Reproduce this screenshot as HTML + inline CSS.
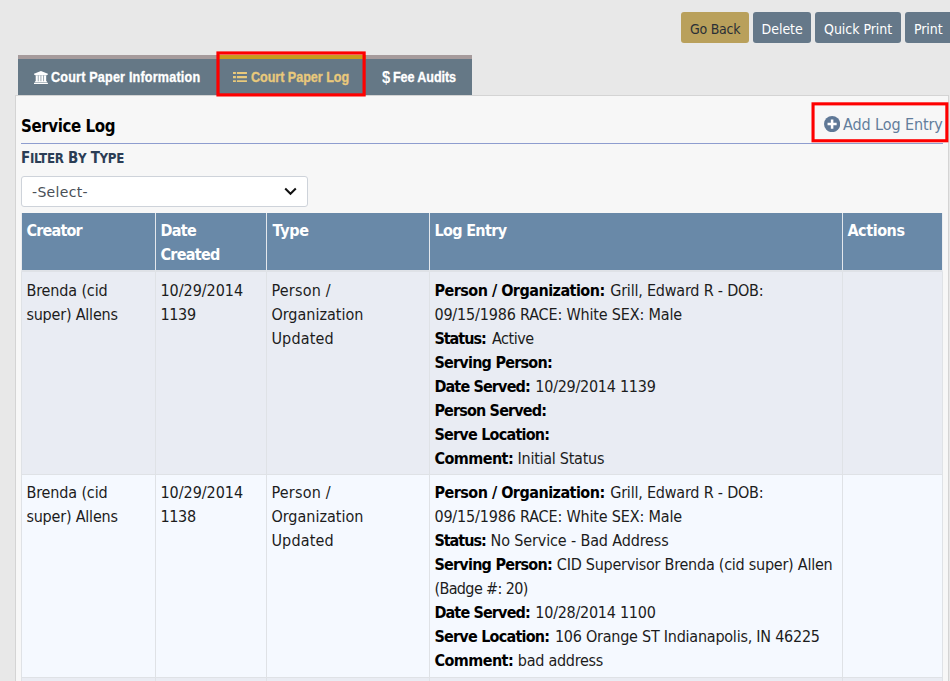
<!DOCTYPE html>
<html lang="en">
<head>
<meta charset="utf-8">
<title>Service Log</title>
<style>
*{box-sizing:border-box;margin:0;padding:0}
html,body{width:950px;height:681px;overflow:hidden;background:#e8e8e8}
body{position:relative;font-family:"DejaVu Sans Condensed","DejaVu Sans","Liberation Sans",sans-serif;font-stretch:condensed;font-size:16px;color:#1c1c1c}
b{font-weight:bold}
.abs{position:absolute}
.btn{position:absolute;top:12px;height:31px;border-radius:3px;background:#657889;color:#fff;font-size:14px;line-height:31px;white-space:nowrap;overflow:hidden}
.btn.gold{background:#b9a05b;color:#2a2f36}
.btn span{position:absolute;left:0;top:2px}
.tabs{position:absolute;left:18px;top:55px;height:40px;width:454px}
.tab{position:absolute;top:0;height:40px;background:#657886;border-top:4px solid #a69b9c;color:#fff;font-family:"Liberation Sans","DejaVu Sans",sans-serif;font-weight:bold;font-size:14px;line-height:36px;white-space:nowrap}
.tab.active{border-top-color:#c99b1c;color:#e9c97b}
.tab b{position:absolute;left:0;top:0;transform-origin:0 50%;-webkit-text-stroke:0.300px currentColor}
.panel{position:absolute;left:15px;top:95px;width:934px;height:600px;background:#f7f7f7;border:1px solid #d4d4d4}
h2{position:absolute;left:0;top:113px;transform-origin:0 50%;font-size:18px;line-height:26px;font-weight:bold;color:#000;white-space:nowrap}
.rule{position:absolute;left:21px;top:143px;width:922px;height:1px;background:#8e9dcf}
.flt{position:absolute;left:0;top:147px;font-weight:bold;color:#2b3d55;font-size:15px;line-height:22px;white-space:nowrap}
.flt small{font-size:13.200px}
.sel{position:absolute;left:21px;top:176px;width:287px;height:31px;background:#fff;border:1px solid #ced3da;border-radius:3px;font-family:"DejaVu Sans","Liberation Sans",sans-serif;font-stretch:normal;font-size:14px;line-height:29px;color:#495057;white-space:nowrap}
.sel span{position:absolute;left:0;top:1px}
.add{position:absolute;left:0;top:112px;font-size:16px;line-height:26px;color:#627d9c;white-space:nowrap}
table{position:absolute;left:21px;top:213px;border-collapse:separate;border-spacing:0;table-layout:fixed;width:922px}
th,td{padding:0 0 0 5px;line-height:24px;vertical-align:top;text-align:left;font-size:16px;font-weight:normal;border-right:1px solid #dfe2e6;white-space:nowrap;overflow:hidden}
th{background:#6989a8;color:#fff;height:59px;padding-top:6px;border-right-color:#e3e7ec;border-bottom:2px solid #dfe2e7}
td{height:203px;padding-top:6px;border-bottom:1px solid #dfe2e6}
tr.r1 td{background:#e9ecf3;height:203px;padding-top:7px}
tr.r2 td{background:#f5f9ff;height:203px;padding-top:6px}
td b{color:#000}
th:first-child,td:first-child{border-left:1px solid #dfe2e6}
th:first-child{border-left-color:#e9ebee}
.ln{height:24px}
</style>
</head>
<body>

<div class="btn gold" style="left:681px;width:68px"><span id="b1" style="letter-spacing:-0.250px;margin-left:9.00px">Go Back</span></div>
<div class="btn" style="left:753px;width:58px"><span id="b2" style="letter-spacing:-0.020px;margin-left:8.50px">Delete</span></div>
<div class="btn" style="left:815px;width:86px"><span id="b3" style="letter-spacing:-0.040px;margin-left:9.05px">Quick Print</span></div>
<div class="btn" style="left:905px;width:60px"><span id="b4" style="letter-spacing:-0.075px;margin-left:9.00px">Print</span></div>
<div class="panel"></div>
<div class="tabs">
<div class="tab" style="left:0;width:199px">
<svg class="abs" style="left:16.050px;top:11.840px" width="13.900" height="13.160" viewBox="0 0 1920 1792" preserveAspectRatio="none"><path fill="#fff" d="M960 0L1920 384V512H1792V576H128V512H0V384ZM236 620H532V1408H236ZM620 620H916V1408H620ZM1004 620H1300V1408H1004ZM1388 620H1684V1408H1388ZM128 1408H1792V1536H128ZM0 1600H1920V1792H0Z"/></svg>
<b id="t1" style="letter-spacing:0.212px;margin-left:33.00px;transform:scaleX(0.9)">Court Paper Information</b></div>
<div class="tab active" style="left:199px;width:149px">
<svg class="abs" style="left:16.100px;top:12.900px" width="14" height="10.300" viewBox="0 0 14 10.300"><path fill="#e9c97b" d="M0 0h2.900v2.100H0zM3.900 0H13.950v2.100H3.900zM0 4.050h2.900v2.100H0zM3.900 4.050H13.950v2.100H3.900zM0 8.150h2.900v2.100H0zM3.900 8.150H13.950v2.100H3.900z"/></svg>
<b id="t2" style="letter-spacing:-0.044px;margin-left:33.55px;transform:scaleX(0.9)">Court Paper Log</b></div>
<div class="tab" style="left:348px;width:106px">
<b id="t3a" style="margin-left:16.35px;transform:scaleX(0.9);font-size:16.500px;top:0;-webkit-text-stroke:0">$</b><b id="t3" style="letter-spacing:-0.111px;margin-left:27.00px;transform:scaleX(0.9)">Fee Audits</b></div>
</div>
<svg class="abs" style="left:210px;top:46px" width="162" height="56" viewBox="210 46 162 56"><rect x="218" y="53" width="146.100" height="41.900" fill="none" stroke="#fe0000" stroke-width="3.200"/></svg>
<h2><b id="h2" style="letter-spacing:-0.441px;margin-left:20.50px;transform:scaleX(0.93);display:inline-block;transform-origin:0 50%">Service Log</b></h2>
<div class="rule"></div>
<svg class="abs" style="left:823.700px;top:115.700px" width="16.200" height="16.200" viewBox="0 0 16 16"><circle cx="8" cy="8" r="8" fill="#5f7896"/><path d="M8 3.500v9M3.500 8h9" stroke="#fff" stroke-width="2.500"/></svg>
<div class="add"><span id="add" style="letter-spacing:-0.092px;margin-left:843.00px">Add Log Entry</span></div>
<svg class="abs" style="left:806px;top:98px" width="144" height="50" viewBox="806 98 144 50"><rect x="813.050" y="103.850" width="133.800" height="36.900" fill="none" stroke="#fe0000" stroke-width="3.100"/></svg>
<div class="flt"><span id="flt" style="letter-spacing:-0.300px;margin-left:21.00px">F<small>ILTER</small> B<small>Y</small> T<small>YPE</small></span></div>
<div class="sel"><span id="sel" style="letter-spacing:0.329px;margin-left:10.00px">-Select-</span>
<svg class="abs" style="left:261.800px;top:9.500px" width="13" height="9" viewBox="0 0 13 9"><path d="M1.200 1.500L6.500 6.800L11.800 1.500" fill="none" stroke="#111" stroke-width="2"/></svg></div>
<table>
<colgroup><col style="width:135px"><col style="width:111px"><col style="width:163px"><col style="width:413px"><col style="width:100px"></colgroup>
<thead><tr>
<th><div class="ln"><b id="hc" style="letter-spacing:-0.783px;margin-left:-0.60px">Creator</b></div></th>
<th><div class="ln"><b id="hd1" style="letter-spacing:-0.633px;margin-left:-0.60px">Date</b></div><div class="ln"><b id="hd2" style="letter-spacing:-0.683px;margin-left:-0.60px">Created</b></div></th>
<th><div class="ln"><b id="ht" style="letter-spacing:-0.250px;margin-left:0.50px">Type</b></div></th>
<th><div class="ln"><b id="hl" style="letter-spacing:-0.650px;margin-left:-0.60px">Log Entry</b></div></th>
<th style="border-right-color:#eceef1"><div class="ln"><b id="ha" style="letter-spacing:-0.433px;margin-left:-0.60px">Actions</b></div></th>
</tr></thead><tbody>
<tr class="r1">
<td><div class="ln"><span id="Ac1a" style="letter-spacing:-0.140px;margin-left:-0.60px">Brenda (cid</span></div><div class="ln"><span id="Ac1b" style="letter-spacing:-0.208px;margin-left:-0.60px">super) Allens</span></div></td>
<td><div class="ln"><span id="Ac2a" style="letter-spacing:-0.022px;margin-left:-0.60px">10/29/2014</span></div><div class="ln"><span id="Ac2b" style="letter-spacing:-0.300px;margin-left:-0.60px">1139</span></div></td>
<td><div class="ln"><span id="Ac3a" style="letter-spacing:0.214px;margin-left:-0.60px">Person /</span></div><div class="ln"><span id="Ac3b" style="margin-left:-0.60px">Organization</span></div><div class="ln"><span id="Ac3c" style="letter-spacing:0.150px;margin-left:-0.60px">Updated</span></div></td>
<td><div class="ln"><b id="Al1a" style="letter-spacing:-0.519px;margin-left:-0.60px">Person / Organization:</b> <span id="Al1b" style="letter-spacing:-0.210px;margin-left:0.90px">Grill, Edward R - DOB:</span></div><div class="ln"><span id="Al2" style="letter-spacing:-0.174px;margin-left:-0.60px">09/15/1986 RACE: White SEX: Male</span></div><div class="ln"><b id="Al3a" style="letter-spacing:-1.017px;margin-left:-0.60px">Status:</b> <span id="Al3b" style="letter-spacing:-0.480px;margin-left:1.70px">Active</span></div><div class="ln"><b id="Al4a" style="letter-spacing:-0.764px;margin-left:-0.60px">Serving Person:</b></div><div class="ln"><b id="Al5a" style="letter-spacing:-0.855px;margin-left:-0.60px">Date Served:</b> <span id="Al5b" style="letter-spacing:-0.264px;margin-left:0.85px">10/29/2014 1139</span></div><div class="ln"><b id="Al6a" style="letter-spacing:-0.846px;margin-left:-0.60px">Person Served:</b></div><div class="ln"><b id="Al7a" style="letter-spacing:-0.764px;margin-left:-0.60px">Serve Location:</b></div><div class="ln"><b id="Al8a" style="letter-spacing:-0.543px;margin-left:-0.60px">Comment:</b> <span id="Al8b" style="letter-spacing:-0.269px;margin-left:-0.15px">Initial Status</span></div></td>
<td></td>
</tr>
<tr class="r2">
<td><div class="ln"><span id="Bc1a" style="letter-spacing:-0.140px;margin-left:-0.60px">Brenda (cid</span></div><div class="ln"><span id="Bc1b" style="letter-spacing:-0.208px;margin-left:-0.60px">super) Allens</span></div></td>
<td><div class="ln"><span id="Bc2a" style="letter-spacing:-0.022px;margin-left:-0.60px">10/29/2014</span></div><div class="ln"><span id="Bc2b" style="letter-spacing:-0.300px;margin-left:-0.60px">1138</span></div></td>
<td><div class="ln"><span id="Bc3a" style="letter-spacing:0.214px;margin-left:-0.60px">Person /</span></div><div class="ln"><span id="Bc3b" style="margin-left:-0.60px">Organization</span></div><div class="ln"><span id="Bc3c" style="letter-spacing:0.150px;margin-left:-0.60px">Updated</span></div></td>
<td><div class="ln"><b id="Bl1a" style="letter-spacing:-0.519px;margin-left:-0.60px">Person / Organization:</b> <span id="Bl1b" style="letter-spacing:-0.210px;margin-left:0.90px">Grill, Edward R - DOB:</span></div><div class="ln"><span id="Bl2" style="letter-spacing:-0.174px;margin-left:-0.60px">09/15/1986 RACE: White SEX: Male</span></div><div class="ln"><b id="Bl3a" style="letter-spacing:-1.017px;margin-left:-0.60px">Status:</b> <span id="Bl3b" style="letter-spacing:-0.139px;margin-left:0.25px">No Service - Bad Address</span></div><div class="ln"><b id="Bl4a" style="letter-spacing:-0.764px;margin-left:-0.60px">Serving Person:</b> <span id="Bl4b" style="letter-spacing:-0.247px;margin-left:0.30px">CID Supervisor Brenda (cid super) Allen</span></div><div class="ln"><span id="Bl5" style="letter-spacing:-0.625px;margin-left:-0.60px">(Badge #: 20)</span></div><div class="ln"><b id="Bl6a" style="letter-spacing:-0.855px;margin-left:-0.60px">Date Served:</b> <span id="Bl6b" style="letter-spacing:-0.264px;margin-left:0.85px">10/28/2014 1100</span></div><div class="ln"><b id="Bl7a" style="letter-spacing:-0.764px;margin-left:-0.60px">Serve Location:</b> <span id="Bl7b" style="letter-spacing:-0.240px;margin-left:0.95px">106 Orange ST Indianapolis, IN 46225</span></div><div class="ln"><b id="Bl8a" style="letter-spacing:-0.543px;margin-left:-0.60px">Comment:</b> <span id="Bl8b" style="letter-spacing:-0.260px">bad address</span></div></td>
<td></td>
</tr>
<tr class="r1"><td></td><td></td><td></td><td></td><td></td></tr>
</tbody></table>
</body>
</html>
